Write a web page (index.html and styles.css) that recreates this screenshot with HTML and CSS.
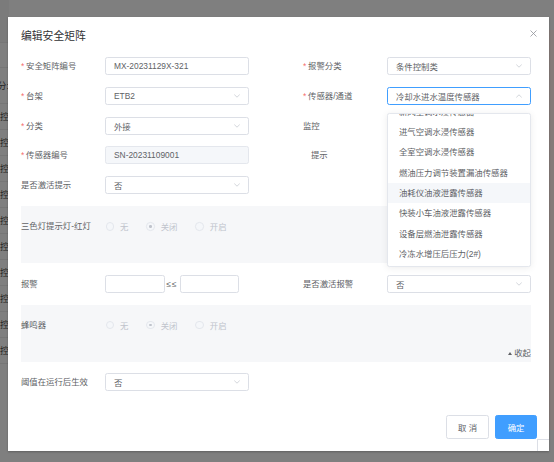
FILE: index.html
```html
<!DOCTYPE html>
<html lang="zh-CN">
<head>
<meta charset="utf-8">
<title>编辑安全矩阵</title>
<link rel="stylesheet" href="styles.css">
</head>
<body>
<div class="page">
  <div class="page-left">
    <div class="pl-head"></div>
    <div class="pl-th"></div>
    <div class="pl-row pl-first"><span>部分:</span></div>
    <div class="pl-row"><span>外控</span></div>
    <div class="pl-row"><span>外控</span></div>
    <div class="pl-row"><span>外控</span></div>
    <div class="pl-row"><span>外控</span></div>
    <div class="pl-row"><span>外控</span></div>
    <div class="pl-row"><span>外控</span></div>
    <div class="pl-row"><span>外控</span></div>
    <div class="pl-row"><span>外控</span></div>
    <div class="pl-row"><span>外控</span></div>
    <div class="pl-row"><span>外控</span></div>
  </div>
  <div class="page-right"><div class="page-thumb"></div></div>
</div>

<div class="dialog">
  <div class="dlg-header">
    <span class="dlg-title">编辑安全矩阵</span>
    <span class="dlg-close"><svg width="7" height="7" viewBox="0 0 7 7"><path d="M0.5 0.5L6.5 6.5M6.5 0.5L0.5 6.5" stroke="#909399" stroke-width="0.8" fill="none"/></svg></span>
  </div>
  <div class="dlg-body">
    <div class="grid">
      <div class="item"><span class="lbl req">安全矩阵编号</span><div class="input"><span>MX-20231129X-321</span></div></div>
      <div class="item"><span class="lbl req">报警分类</span><div class="input"><span>条件控制类</span><svg class="chev" width="6" height="4" viewBox="0 0 6 4"><path d="M0.3 0.6L3 3.2L5.7 0.6" stroke="#c0c4cc" stroke-width="0.7" fill="none"/></svg></div></div>

      <div class="item"><span class="lbl req">台架</span><div class="input"><span>ETB2</span><svg class="chev" width="6" height="4" viewBox="0 0 6 4"><path d="M0.3 0.6L3 3.2L5.7 0.6" stroke="#c0c4cc" stroke-width="0.7" fill="none"/></svg></div></div>
      <div class="item"><span class="lbl req">传感器/通道</span><div class="input focus"><span>冷却水进水温度传感器</span><svg class="chev" width="6" height="4" viewBox="0 0 6 4"><path d="M0.3 3.4L3 0.8L5.7 3.4" stroke="#c0c4cc" stroke-width="0.7" fill="none"/></svg></div></div>

      <div class="item"><span class="lbl req">分类</span><div class="input"><span>外接</span><svg class="chev" width="6" height="4" viewBox="0 0 6 4"><path d="M0.3 0.6L3 3.2L5.7 0.6" stroke="#c0c4cc" stroke-width="0.7" fill="none"/></svg></div></div>
      <div class="item"><span class="lbl">监控</span><div class="input"><span></span></div></div>

      <div class="item"><span class="lbl req">传感器编号</span><div class="input disabled"><span>SN-20231109001</span></div></div>
      <div class="item"><span class="lbl indent">提示</span><div class="input"><span></span></div></div>

      <div class="item"><span class="lbl">是否激活提示</span><div class="input"><span>否</span><svg class="chev" width="6" height="4" viewBox="0 0 6 4"><path d="M0.3 0.6L3 3.2L5.7 0.6" stroke="#c0c4cc" stroke-width="0.7" fill="none"/></svg></div></div>
      <div class="item"></div>
    </div>

    <div class="section">
      <div class="item">
        <span class="lbl">三色灯提示灯-红灯</span>
        <div class="radios">
          <span class="radio"><span class="radio-dot"></span>无</span>
          <span class="radio"><span class="radio-dot checked"></span>关闭</span>
          <span class="radio"><span class="radio-dot"></span>开启</span>
        </div>
      </div>
    </div>

    <div class="grid">
      <div class="item"><span class="lbl">报警</span>
        <div class="range">
          <div class="input small"><span></span></div>
          <span class="le">≤≤</span>
          <div class="input small2"><span></span></div>
        </div>
      </div>
      <div class="item"><span class="lbl">是否激活报警</span><div class="input"><span>否</span><svg class="chev" width="6" height="4" viewBox="0 0 6 4"><path d="M0.3 0.6L3 3.2L5.7 0.6" stroke="#c0c4cc" stroke-width="0.7" fill="none"/></svg></div></div>
    </div>

    <div class="section">
      <div class="item">
        <span class="lbl">蜂鸣器</span>
        <div class="radios">
          <span class="radio"><span class="radio-dot"></span>无</span>
          <span class="radio"><span class="radio-dot checked"></span>关闭</span>
          <span class="radio"><span class="radio-dot"></span>开启</span>
        </div>
      </div>
      <span class="collapse"><svg width="4" height="3" viewBox="0 0 4 3"><path d="M0 3L2 0L4 3Z" fill="#606266"/></svg>收起</span>
    </div>

    <div class="grid">
      <div class="item"><span class="lbl">阈值在运行后生效</span><div class="input"><span>否</span><svg class="chev" width="6" height="4" viewBox="0 0 6 4"><path d="M0.3 0.6L3 3.2L5.7 0.6" stroke="#c0c4cc" stroke-width="0.7" fill="none"/></svg></div></div>
    </div>
  </div>
  <div class="dlg-footer">
    <button class="btn btn-cancel">取 消</button>
    <button class="btn btn-primary">确定</button>
  </div>

  <div class="dropdown">
    <ul class="dd-list">
      <li>新风空调水浸传感器</li>
      <li>进气空调水浸传感器</li>
      <li>全室空调水浸传感器</li>
      <li>燃油压力调节装置漏油传感器</li>
      <li class="hover">油耗仪油液泄露传感器</li>
      <li>快装小车油液泄露传感器</li>
      <li>设备层燃油泄露传感器</li>
      <li>冷冻水增压后压力(2#)</li>
    </ul>
  </div>
  <div class="corner"></div>
</div>
</body>
</html>
```

FILE: styles.css
```css
* { box-sizing: border-box; margin: 0; padding: 0; }
html, body { width: 554px; height: 462px; overflow: hidden; }
body {
  position: relative;
  background: #7f7f7f;
  font-family: "Liberation Sans", "Noto Sans CJK SC", sans-serif;
  color: #606266;
}

/* dimmed page behind the modal */
.page { display: flex; height: 462px; }
.page-left { width: 9px; display: flex; flex-direction: column; overflow: hidden; }
.pl-head { flex: none; height: 43px; border-bottom: 1px solid #767676; background: #7b7b7b; }
.pl-th { flex: none; height: 25px; border-bottom: 1px solid #767676; }
.pl-row {
  flex: none; height: 26px; display: flex; justify-content: flex-end; align-items: center;
  border-bottom: 1px solid #767676; font-size: 9px; color: #262626; white-space: nowrap;
}
.pl-first { height: 36px; }
.page-right { width: 5px; margin-left: auto; padding: 30px 0 32px; }
.page-thumb { height: 100%; background: #867b79; }

/* dialog */
.dialog {
  position: absolute; left: 8px; top: 17px; width: 541px; height: 434px;
  background: #fff; display: flex; flex-direction: column;
  box-shadow: 0 1px 2px rgba(0,0,0,.25);
}
.dlg-header { display: flex; justify-content: space-between; padding: 12px 12.5px 0 13px; height: 40px; }
.dlg-title { font-size: 10.8px; line-height: 14px; color: #303133; }
.dlg-close { display: block; width: 7px; height: 7px; margin-top: 1px; }
.dlg-close svg { display: block; }

.dlg-body { display: flex; flex-direction: column; gap: 11.8px; padding: 0 18px 0 13px; }
.grid { display: grid; grid-template-columns: 228px 228px; column-gap: 54px; row-gap: 11.8px; }
.item { display: flex; align-items: center; height: 18px; }
.lbl { flex: none; width: 83.5px; font-size: 8.4px; line-height: 18px; color: #606266; white-space: nowrap; }
.req::before { content: "*"; color: #f56c6c; margin-right: 1.8px; }
.indent { padding-left: 8px; }

.input {
  flex: 1; height: 18px; border: 1px solid #dcdfe6; border-radius: 2.4px;
  padding: 0 8px 0 8.5px; display: flex; align-items: center; justify-content: space-between;
  font-size: 8.4px; color: #606266; background: #fff; white-space: nowrap;
}
.input.focus { border-color: #409eff; }
.input.disabled { background: #f5f7fa; border-color: #e4e7ed; }
.chev { display: block; flex: none; }

.range { display: flex; align-items: center; }
.input.small { flex: none; width: 60px; }
.input.small2 { flex: none; width: 59px; }
.le { font-size: 8.4px; color: #606266; margin: 0 2px; letter-spacing: 1px; white-space: nowrap; }

.section { height: 57px; background: #f6f7f9; padding-top: 11.5px; display: flex; flex-direction: column; }
.radios { display: flex; align-items: center; padding-left: 1px; }
.radio { display: flex; align-items: center; margin-right: 18px; font-size: 8.4px; color: #c0c4cc; }
.radio-dot {
  width: 8.4px; height: 8.4px; border: 1px solid #e4e7ed; border-radius: 50%;
  background: #f5f7fa; margin-right: 6px; display: flex; align-items: center; justify-content: center;
}
.radio-dot.checked::after { content: ""; width: 2.4px; height: 2.4px; border-radius: 50%; background: #c0c4cc; }
.collapse {
  margin-top: auto; align-self: flex-end; display: flex; align-items: center; gap: 2px;
  font-size: 8.4px; line-height: 10px; color: #606266; padding-bottom: 3.5px;
}
.collapse svg { display: block; }

.dlg-footer { margin-top: auto; display: flex; justify-content: flex-end; gap: 6px; padding: 0 12px 12px; }
.btn {
  height: 24px; padding: 0; font-family: inherit; font-size: 8.4px; color: #606266;
  background: #fff; border: 1px solid #dcdfe6; border-radius: 2.4px;
  white-space: nowrap; text-align: center;
}
.btn-cancel { width: 43px; }
.btn-primary { background: #409eff; border-color: #409eff; color: #fff; width: 42px; }

/* select dropdown (floats over the form) */
.dropdown {
  position: absolute; left: 379px; top: 96px; width: 144px; height: 154px;
  background: #fff; border: 1px solid #e4e7ed; border-radius: 2.4px;
  box-shadow: 0 1px 7px rgba(0,0,0,.08); overflow: hidden;
}
.dd-list { list-style: none; margin-top: -15.8px; padding: 3.6px 0; }
.dd-list li { height: 20.3px; line-height: 20.3px; padding: 0 11px; font-size: 8.4px; color: #606266; white-space: nowrap; }
.dd-list li.hover { background: #f5f7fa; }

.corner {
  position: absolute; left: 529px; top: 422px; width: 12px; height: 12px;
  border-left: 1px solid #dcdfe6; border-top: 1px solid #dcdfe6;
}
```
